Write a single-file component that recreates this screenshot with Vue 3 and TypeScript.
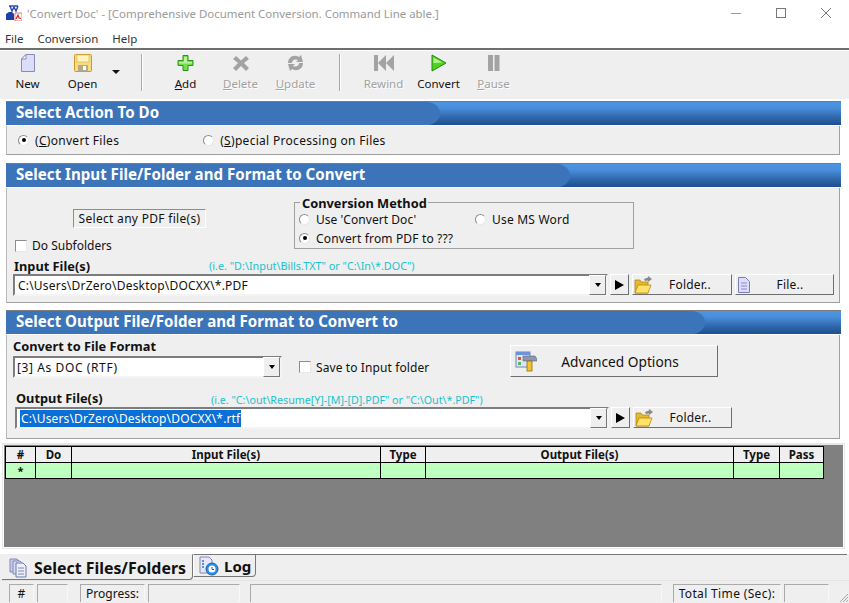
<script setup lang="ts">
const columns = [
  { label: '#', width: 30 },
  { label: 'Do', width: 36 },
  { label: 'Input File(s)', width: 309 },
  { label: 'Type', width: 45 },
  { label: 'Output File(s)', width: 308 },
  { label: 'Type', width: 46 },
  { label: 'Pass', width: 44 },
]
</script>

<template>
  <div class="app">
    <header class="titlebar">
      <svg class="appicon" width="16" height="16" viewBox="0 0 16 16">
        <path d="M3 0h9v2H3z" fill="#5b7fd0" />
        <path d="M4 1l2 5 2-4 2 4 2-5" fill="none" stroke="#2a45b0" stroke-width="1.4" />
        <path d="M0 15V9l3-2h3l2 2v6z" fill="#1f3fa8" />
        <rect x="9" y="8" width="7" height="8" fill="#fff" stroke="#a33" stroke-width=".6" />
        <path d="M10 14l2-4 1 3 2 .5" fill="none" stroke="#d22" stroke-width="1.2" />
      </svg>
      <span class="title">'Convert Doc' - [Comprehensive Document Conversion. Command Line able.]</span>
      <div class="winctl">
        <svg width="12" height="12" viewBox="0 0 12 12"><path d="M1 6.5h10" stroke="#999" /></svg>
        <svg width="12" height="12" viewBox="0 0 12 12"><rect x="1.5" y="1.5" width="9" height="9" fill="none" stroke="#777" /></svg>
        <svg width="12" height="12" viewBox="0 0 12 12"><path d="M1 1l10 10M11 1L1 11" stroke="#777" /></svg>
      </div>
    </header>

    <nav class="menubar"><span>File</span><span>Conversion</span><span>Help</span></nav>

    <div class="toolbar">
      <div class="tool">
        <svg width="16" height="18" viewBox="0 0 16 18">
          <path d="M1.5 5l4.500-4.500h8.500v17h-13z" fill="#dcdcfb" stroke="#8a8ab8" />
          <path d="M1.5 5h4.500V.5z" fill="#fff" stroke="#8a8ab8" />
        </svg>
        <span>New</span>
      </div>
      <div class="tool">
        <svg width="18" height="18" viewBox="0 0 18 18">
          <rect x=".5" y=".5" width="17" height="17" rx="1" fill="#f7dc82" stroke="#c89a2a" />
          <rect x="3" y="1" width="12" height="7" fill="#fff3c0" stroke="#d9b04a" stroke-width=".6" />
          <rect x="4" y="11" width="10" height="6.5" fill="#b9a98a" />
          <rect x="9" y="12" width="3" height="4" fill="#fff" />
        </svg>
        <span>Open</span>
      </div>
      <i class="drop"></i>
      <i class="sep sep-a"></i>
      <div class="tool">
        <svg width="17" height="18" viewBox="0 0 17 18">
          <path d="M6 1.500h5v5h5v5h-5v5H6v-5H1v-5h5z" fill="#6fe04a" stroke="#2f8f1c" />
          <path d="M7 3h3v5h5v1.500H2V8h5z" fill="#b7f59a" />
        </svg>
        <span><u>A</u>dd</span>
      </div>
      <div class="tool off">
        <svg width="16" height="18" viewBox="0 0 16 18">
          <path d="M3 2l5 4.500L13 2l3 3-5 4 5 5-3 3-5-5-5 5-3-3 5-5-5-4z" fill="#a3a3a3" />
        </svg>
        <span><u>D</u>elete</span>
      </div>
      <div class="tool off">
        <svg width="17" height="18" viewBox="0 0 17 18">
          <path d="M1 9C1 3 7 0 12 3l2-2 2 7h-7l2-2C8 4.500 5 6 5 9z" fill="#a3a3a3" />
          <path d="M16 9c0 6-6 9-11 6l-2 2-2-7h7l-2 2c3 1.500 6 0 6-3z" fill="#a3a3a3" />
        </svg>
        <span><u>U</u>pdate</span>
      </div>
      <i class="sep sep-b"></i>
      <div class="tool off">
        <svg width="20" height="18" viewBox="0 0 20 18">
          <rect x="0" y="1" width="4" height="16" fill="#a3a3a3" />
          <path d="M12 1v16L4 9zM20 1v16l-8-8z" fill="#a3a3a3" />
        </svg>
        <span>Rewind</span>
      </div>
      <div class="tool">
        <svg width="16" height="18" viewBox="0 0 16 18">
          <path d="M1 1l14 8-14 8z" fill="#4fd41e" stroke="#1f8a0c" />
          <path d="M2.500 3.500l9 5-9 .5z" fill="#b4f58e" />
        </svg>
        <span>Convert</span>
      </div>
      <div class="tool off">
        <svg width="12" height="18" viewBox="0 0 12 18">
          <rect x="0" y="1" width="5" height="16" fill="#a3a3a3" />
          <rect x="6.500" y="1" width="5" height="16" fill="#a3a3a3" />
        </svg>
        <span><u>P</u>ause</span>
      </div>
    </div>

    <section class="sec sec1">
      <h2 class="band"><span class="band-fill fill1">Select Action To Do</span></h2>
      <div class="panel actions">
        <label class="opt"><i class="radio on"></i>(<u>C</u>)onvert Files</label>
        <label class="opt opt-s"><i class="radio"></i>(<u>S</u>)pecial Processing on Files</label>
      </div>
    </section>

    <section class="sec sec2">
      <h2 class="band"><span class="band-fill fill2">Select Input File/Folder and Format to Convert</span></h2>
      <div class="panel inputs">
        <div class="top">
          <div class="left">
            <div class="sunken">Select any PDF file(s)</div>
            <label class="opt sub"><i class="check"></i>Do Subfolders</label>
          </div>
          <fieldset class="method">
            <legend>Conversion Method</legend>
            <div class="mrow">
              <label class="opt m1"><i class="radio"></i>Use 'Convert Doc'</label>
              <label class="opt"><i class="radio"></i>Use MS Word</label>
            </div>
            <label class="opt m2"><i class="radio on"></i>Convert from PDF to ???</label>
          </fieldset>
        </div>
        <div class="labelrow">
          <b class="lab">Input File(s)</b>
          <span class="hint hint-in">(i.e. "D:\Input\Bills.TXT"  or "C:\In\*.DOC")</span>
        </div>
        <div class="fileline">
          <div class="combo path-in">
            <span class="val">C:\Users\DrZero\Desktop\DOCXX\*.PDF</span>
            <i class="cbtn"><b></b></i>
          </div>
          <button class="btn play"><b></b></button>
          <button class="btn wide">
            <svg width="18" height="18" viewBox="0 0 18 18">
              <path d="M10 3l4-1.500V0l4 3-4 3V4.500L11 5z" fill="#888" />
              <path d="M1 17V4h5l1 2h7v11z" fill="#e8b92a" stroke="#a67f12" stroke-width=".7" />
              <path d="M1 17l3-8h13l-3 8z" fill="#ffe266" stroke="#a67f12" stroke-width=".7" />
            </svg>
            <span>Folder..</span>
          </button>
          <button class="btn wide filebtn">
            <svg width="14" height="18" viewBox="0 0 14 18">
              <path d="M1.500 1.500h7l4 4v11h-11z" fill="#dcdcfb" stroke="#7d7db5" />
              <path d="M4 7h6M4 10h6M4 13h6" stroke="#8c8cc0" />
            </svg>
            <span>File..</span>
          </button>
        </div>
      </div>
    </section>

    <section class="sec sec3">
      <h2 class="band"><span class="band-fill fill3">Select Output File/Folder and Format to Convert to</span></h2>
      <div class="panel outputs">
        <div class="fmt">
          <div class="fmtleft">
            <b class="lab">Convert to File Format</b>
            <div class="combo fmtcombo">
              <span class="val">[3] As DOC (RTF)</span>
              <i class="cbtn"><b></b></i>
            </div>
          </div>
          <label class="opt save"><i class="check"></i>Save to Input folder</label>
          <button class="btn adv">
            <svg width="22" height="22" viewBox="0 0 22 22">
              <rect x="1" y="2" width="14" height="15" fill="#dfe7f7" stroke="#6e86b8" />
              <rect x="1" y="2" width="14" height="3" fill="#6f93d8" />
              <rect x="3" y="7" width="3" height="3" fill="#d9534f" />
              <rect x="3" y="12" width="3" height="3" fill="#5cb85c" />
              <path d="M8 6h12l2 3v2H8z" fill="#8b97ad" stroke="#5c6678" stroke-width=".6" />
              <rect x="12" y="11" width="5" height="10" fill="#f2c230" stroke="#8d6d0e" stroke-width=".8" />
            </svg>
            <span>Advanced Options</span>
          </button>
        </div>
        <div class="labelrow outlab">
          <b class="lab">Output File(s)</b>
          <span class="hint hint-out">(i.e. "C:\out\Resume[Y]-[M]-[D].PDF" or "C:\Out\*.PDF")</span>
        </div>
        <div class="fileline outline">
          <div class="combo path-out">
            <span class="val"><mark>C:\Users\DrZero\Desktop\DOCXX\*.rtf</mark></span>
            <i class="cbtn"><b></b></i>
          </div>
          <button class="btn play"><b></b></button>
          <button class="btn wide">
            <svg width="18" height="18" viewBox="0 0 18 18">
              <path d="M10 3l4-1.500V0l4 3-4 3V4.500L11 5z" fill="#888" />
              <path d="M1 17V4h5l1 2h7v11z" fill="#e8b92a" stroke="#a67f12" stroke-width=".7" />
              <path d="M1 17l3-8h13l-3 8z" fill="#ffe266" stroke="#a67f12" stroke-width=".7" />
            </svg>
            <span>Folder..</span>
          </button>
        </div>
      </div>
    </section>

    <div class="gridwrap">
      <table class="grid">
        <colgroup><col v-for="(c, i) in columns" :key="i" :style="{ width: c.width + 'px' }" /></colgroup>
        <thead><tr><th v-for="(c, i) in columns" :key="i">{{ c.label }}</th></tr></thead>
        <tbody><tr><td class="star">*</td><td v-for="n in 6" :key="n"></td></tr></tbody>
      </table>
    </div>

    <div class="tabs">
      <div class="tab active">
        <svg width="20" height="20" viewBox="0 0 20 20">
          <path d="M2 1h7l2 2v11H2z" fill="#c6cdea" stroke="#8189b5" />
          <path d="M5 3h7l2 2v11H5z" fill="#d6dbf2" stroke="#8189b5" />
          <path d="M8 5h7l3 3v11H8z" fill="#eceefa" stroke="#7078a8" />
          <path d="M10 10h6M10 13h6M10 16h6" stroke="#7f88bb" />
        </svg>
        <span>Select Files/Folders</span>
      </div>
      <div class="tab">
        <svg width="20" height="20" viewBox="0 0 20 20">
          <path d="M1 1h9l3 3v13H1z" fill="#e6e8fa" stroke="#8189b5" />
          <path d="M3 5h2M3 8h2M3 11h2" stroke="#3a6fd0" stroke-width="1.400" />
          <circle cx="13" cy="13" r="6" fill="#2f8fe6" stroke="#1560ad" />
          <circle cx="13" cy="13" r="3.500" fill="#fff" />
          <path d="M13 11v2.500h2" fill="none" stroke="#1560ad" />
        </svg>
        <span>Log</span>
      </div>
      <div class="tabrest"></div>
    </div>

    <footer class="status">
      <span class="cell c1">#</span>
      <span class="cell c2"></span>
      <span class="cell c3">Progress:</span>
      <span class="cell c4"></span>
      <span class="cell c5"></span>
      <span class="cell c6">Total Time (Sec):</span>
      <span class="cell c7"></span>
      <svg class="grip" width="12" height="12" viewBox="0 0 12 12">
        <path d="M11 3l-8 8M11 6l-5 5M11 9l-2 2" stroke="#a8a8a8" />
      </svg>
    </footer>
  </div>
</template>

<style>
html, body { margin: 0; background: #fff; }
</style>

<style scoped>
.app {
  width: 849px;
  height: 603px;
  overflow: hidden;
  display: flex;
  flex-direction: column;
  background: #fff;
  font-family: "Noto Sans", sans-serif;
  font-size: 12px;
  color: #111;
}
i { font-style: normal; display: block; flex: none; }

.titlebar { height: 31px; flex: none; display: flex; align-items: center; padding: 0 0 5px 6px; box-sizing: border-box; position: relative; }
.appicon { margin-right: 5px; }
.title { color: #9a9a9a; font-size: 11.450px; white-space: nowrap; }
.winctl { margin-left: auto; display: flex; gap: 33px; padding-right: 17px; align-items: center; padding-top: 0; }

.menubar { height: 15px; flex: none; display: flex; gap: 14px; padding-left: 5px; font-size: 11.500px; line-height: 15px; color: #333; }

.toolbar {
  height: 49px;
  flex: none;
  margin-top: 2px;
  border-top: 2px solid #6e6e6e;
  box-shadow: inset 0 1px 0 #fff;
  background: #efefef;
  display: flex;
  box-sizing: content-box;
  align-items: flex-start;
}
.tool { width: 55px; height: 46px; flex: none; display: flex; flex-direction: column; align-items: center; padding-top: 4px; box-sizing: border-box; gap: 3px; }
.tool svg { height: 18px; flex: none; }
.tool span { font-size: 11.500px; line-height: 18px; white-space: nowrap; }
.tool.off span { color: #a2a2a2; text-shadow: 1px 1px 0 #fff; }
.drop { width: 0; height: 0; border: 4px solid transparent; border-top: 4px solid #111; border-bottom: 0; margin: 20px 0 0 2px; }
.sep { width: 1px; height: 37px; background: #a8a8a8; margin-top: 4px; box-shadow: 1px 0 0 #fff; }
.sep-a { margin-left: 21px; margin-right: 16px; }
.sep-b { margin-left: 16px; margin-right: 16px; }

.sec { flex: none; margin-left: 6px; width: 835px; }
.sec1 { margin-top: 2px; }
.sec2 { margin-top: 8px; }
.sec3 { margin-top: 7px; }
.band {
  margin: 0;
  height: 24px;
  box-sizing: border-box;
  border-top: 1px solid #7a7a7a;
  background: linear-gradient(#4d94e2 0%, #4a8fdc 25%, #2f69ad 65%, #1f4f8e 100%);
  display: flex;
}
.band-fill {
  display: block;
  height: 23px;
  box-sizing: border-box;
  background: #3b74b9;
  color: #fff;
  font-size: 15.100px;
  font-weight: 700;
  line-height: 21px;
  padding-left: 10px;
  border-radius: 0 14px 14px 0 / 0 12px 12px 0;
  white-space: nowrap;
}
.fill1 { width: 434px; }
.fill2 { width: 564px; }
.fill3 { width: 699px; }

.panel { border: 1px solid #a0a0a0; border-top: 0; border-left-color: #b8b8b8; margin-top: 1px; background: #efefef; box-sizing: border-box; width: 834px; position: relative; }

.opt { display: flex; align-items: center; white-space: nowrap; font-size: 12px; letter-spacing: .2px; color: #111; }
.radio {
  width: 11px; height: 11px; border-radius: 50%; background: #fff; box-sizing: border-box;
  border: 1px solid #8c8c8c; border-right-color: #e8e8e8; border-bottom-color: #e8e8e8; margin-right: 6px; position: relative;
}
.radio.on::after { content: ""; position: absolute; left: 2.500px; top: 2.500px; width: 4px; height: 4px; border-radius: 50%; background: #000; }
.check { width: 12px; height: 12px; box-sizing: border-box; background: #fff; border: 1px solid #8c8c8c; border-right-color: #e8e8e8; border-bottom-color: #e8e8e8; margin-right: 5px; }

.actions { height: 29px; display: flex; align-items: center; padding-left: 11px; }
.actions .opt { letter-spacing: .3px; }
.opt-s { margin-left: 84px; }

.inputs { height: 115px; padding-left: 7px; }
.top { height: 69px; display: flex; }
.left { width: 280px; flex: none; position: relative; }
.sunken {
  margin: 21px 0 0 59px; width: 133px; height: 19px; box-sizing: border-box;
  border: 1px solid #8c8c8c; border-right-color: #fff; border-bottom-color: #fff;
  font-size: 12px; letter-spacing: .3px; line-height: 17px; text-align: center; white-space: nowrap;
}
.sub { margin: 11px 0 0 1px; height: 13px; letter-spacing: 0; }
.method {
  margin: 14px 0 0 0; padding: 0 0 0 4px; width: 340px; height: 47px; box-sizing: border-box; flex: none;
  border: 1px solid #a0a0a0; min-inline-size: 0; position: relative;
}
.method legend { font-weight: 700; font-size: 12.800px; padding: 0 1px 0 2px; margin-left: 5px; line-height: 14px; position: absolute; top: -7px; left: 0; background: #efefef; white-space: nowrap; }
.mrow { display: flex; margin-top: 8px; height: 16px; }
.m1 { width: 176px; flex: none; letter-spacing: .05px; }
.m2 { margin-top: 3px; height: 16px; letter-spacing: .15px; }

.labelrow { display: flex; height: 17px; align-items: center; }
.lab { font-weight: 700; font-size: 12.800px; white-space: nowrap; }
.hint { color: #19c3cc; font-size: 10.800px; white-space: pre; }
.hint-in { position: absolute; left: 202px; }
.hint-out { position: absolute; left: 204px; margin-top: 4px; font-size: 10.700px; }

.fileline { display: flex; height: 22px; align-items: flex-start; margin-top: 0; }
.combo {
  height: 22px; box-sizing: border-box; background: #fff; display: flex; align-items: center; flex: none;
  border: 2px solid #7d7d7d; border-right-color: #f4f4f4; border-bottom-color: #f4f4f4; padding-left: 3px;
}
.val { flex: 1; font-size: 12px; letter-spacing: .2px; white-space: nowrap; overflow: hidden; }
mark { background: #0a6fd6; color: #fff; padding: 0 1px; }
.path-out .val { letter-spacing: .15px; }
.cbtn {
  width: 17px; height: 20px; box-sizing: border-box; background: #efefef; display: flex; align-items: center; justify-content: center;
  border: 1px solid #fff; border-right-color: #777; border-bottom-color: #777; margin-top: 0;
}
.cbtn b { width: 0; height: 0; border: 3.500px solid transparent; border-top: 4px solid #000; border-bottom: 0; }
.path-in { width: 595px; margin-left: -1px; }
.path-out { width: 594px; }
.fmtcombo { width: 269px; padding-left: 2px; margin-top: 2px; }
.fmtcombo .val { letter-spacing: .6px; }

.btn {
  height: 21px; box-sizing: border-box; background: #efefef; padding: 0; font: inherit; color: #111;
  border: 1px solid #fff; border-right: 1px solid #6e6e6e; border-bottom: 1px solid #6e6e6e; outline: 0; display: flex; align-items: center; flex: none;
}
.play { width: 19px; margin-left: 2px; justify-content: center; margin-top: 0; }
.play b { width: 0; height: 0; border: 5px solid transparent; border-left: 9px solid #000; border-right: 0; }
.wide { width: 100px; margin-left: 3px; position: relative; padding-left: 1px; }
.wide span { flex: 1; text-align: center; padding-right: 3px; letter-spacing: .2px; }
.filebtn { margin-left: 3px; width: 99px; }
.filebtn span { padding-right: 4px; }

.outputs { height: 104px; padding-left: 7px; }
.fmt { height: 54px; display: flex; }
.fmtleft { width: 269px; margin-left: -1px; flex: none; padding-top: 3px; display: flex; flex-direction: column; }
.fmtleft .lab { line-height: 16px; }
.save { margin: 26px 0 0 17px; height: 12px; align-self: flex-start; width: 211px; flex: none; letter-spacing: .1px; }
.adv { width: 208px; height: 32px; margin-top: 10px; border-width: 1px; padding-left: 4px; }
.adv span { flex: 1; text-align: center; padding-right: 14px; font-size: 13.700px; }
.outlab { margin-left: 2px; height: 18px; }
.outline { margin: 0 0 0 1px; }
.outline .wide { margin-left: 3px; width: 99px; }
.outline .play { margin-left: 2px; }

.gridwrap {
  flex: none; margin: 5px 0 0 3px; width: 841px; height: 104px; box-sizing: border-box;
  background: #808080; border: 1px solid #fff; border-top: 1px solid #e6e6e6; padding: 1px 0 0 1px; outline: 1px solid #e8e8e8;
}
.grid { border-collapse: collapse; table-layout: fixed; width: 818px; }
.grid th { height: 15px; background: #efefef; border: 1px solid #000; font-size: 11.500px; font-weight: 700; padding: 0; line-height: 14px; color: #111; }
.grid td { height: 15px; background: #bfffbf; border: 1px solid #000; padding: 0; text-align: center; font-weight: 700; font-size: 11px; line-height: 12px; }

.tabs { height: 27px; flex: none; display: flex; margin-top: 6px; padding-left: 2px; background: #efefef; align-items: flex-start; border-bottom: 1px solid #e4e4e4; box-sizing: border-box; }
.tab {
  display: flex; align-items: center; gap: 5px; height: 23px; box-sizing: border-box; font-weight: 700; font-size: 15px;
  border: 1px solid #777; border-left-color: #fff; border-radius: 0 0 4px 0; padding: 0 4px 0 5px; background: #efefef; flex: none;
}
.tab.active { height: 26px; width: 191px; border-top-color: #efefef; border-left: 0; padding: 2px 0 0 6px; gap: 6px; font-size: 15.900px; white-space: nowrap; }
.tabrest { flex: 1; border-top: 1px solid #777; margin-right: 2px; }

.status { flex: 1; display: flex; background: #efefef; padding-top: 3px; position: relative; align-items: flex-start; min-height: 0; }
.cell { box-sizing: border-box; border: 1px solid #aaa; border-right-color: #f8f8f8; border-bottom: 0; height: 18px; font-size: 12px; line-height: 17px; flex: none; white-space: nowrap; }
.c1 { margin-left: 9px; width: 25px; text-align: center; }
.c2 { margin-left: 3px; width: 31px; }
.c3 { margin-left: 12px; width: 65px; text-align: center; }
.c4 { margin-left: 3px; width: 92px; }
.c5 { margin-left: 10px; width: 412px; }
.c6 { margin-left: 11px; width: 108px; text-align: center; letter-spacing: .35px; }
.c7 { margin-left: 3px; width: 45px; }
.grip { position: absolute; right: 0; bottom: 0; }
</style>
